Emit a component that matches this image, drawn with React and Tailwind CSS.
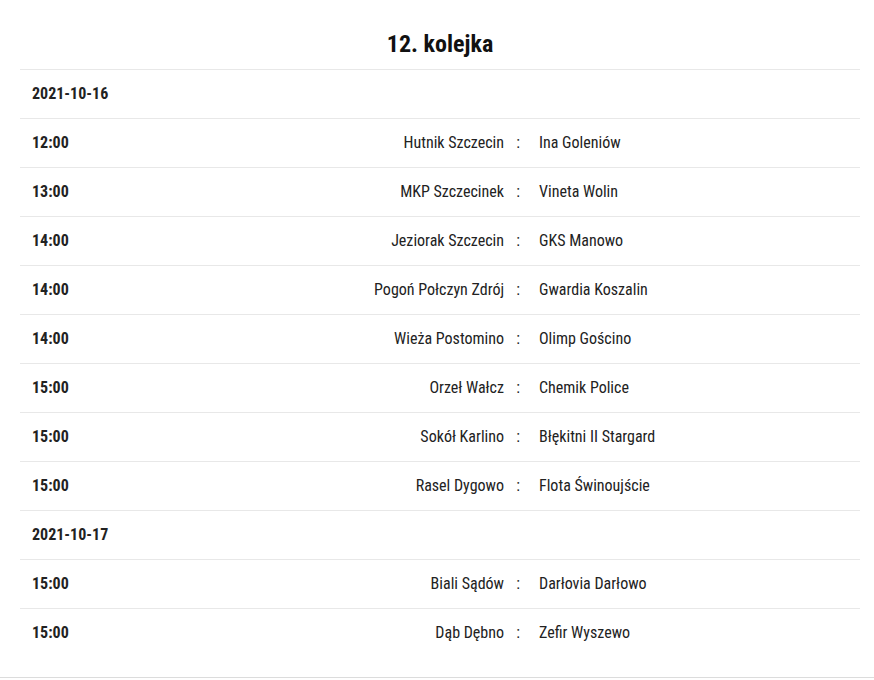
const rows = [
  { date: '2021-10-16' },
  { time: '12:00', home: 'Hutnik Szczecin', away: 'Ina Goleniów' },
  { time: '13:00', home: 'MKP Szczecinek', away: 'Vineta Wolin' },
  { time: '14:00', home: 'Jeziorak Szczecin', away: 'GKS Manowo' },
  { time: '14:00', home: 'Pogoń Połczyn Zdrój', away: 'Gwardia Koszalin' },
  { time: '14:00', home: 'Wieża Postomino', away: 'Olimp Gościno' },
  { time: '15:00', home: 'Orzeł Wałcz', away: 'Chemik Police' },
  { time: '15:00', home: 'Sokół Karlino', away: 'Błękitni II Stargard' },
  { time: '15:00', home: 'Rasel Dygowo', away: 'Flota Świnoujście' },
  { date: '2021-10-17' },
  { time: '15:00', home: 'Biali Sądów', away: 'Darłovia Darłowo' },
  { time: '15:00', home: 'Dąb Dębno', away: 'Zefir Wyszewo' },
]

export default function App() {
  return (
    <div className="bg-white min-h-[680px] text-[#222] font-['Roboto_Condensed','Liberation_Sans_Narrow','Arial_Narrow',Roboto,sans-serif]">
      <div className="pl-5 pr-[14px]">
        <h1 className="h-[69px] flex items-center justify-center pt-[18px] text-[24px] font-bold text-[#111]">12. kolejka</h1>
        {rows.map((r, i) =>
          r.date ? (
            <div key={i} className="h-[49px] border-t border-[#e8e8e8] px-3 flex items-center text-[16px] font-bold">
              {r.date}
            </div>
          ) : (
            <div key={i} className="h-[49px] border-t border-[#e8e8e8] pl-3 grid grid-cols-[472px_28px_1fr] items-center text-[16px]">
              <div className="flex justify-between">
                <span className="font-bold">{r.time}</span>
                <span>{r.home}</span>
              </div>
              <span className="text-center">:</span>
              <span className="pl-[7px]">{r.away}</span>
            </div>
          )
        )}
      </div>
      <div className="mt-[20px] border-t border-[#dcdcdc]" />
    </div>
  )
}
